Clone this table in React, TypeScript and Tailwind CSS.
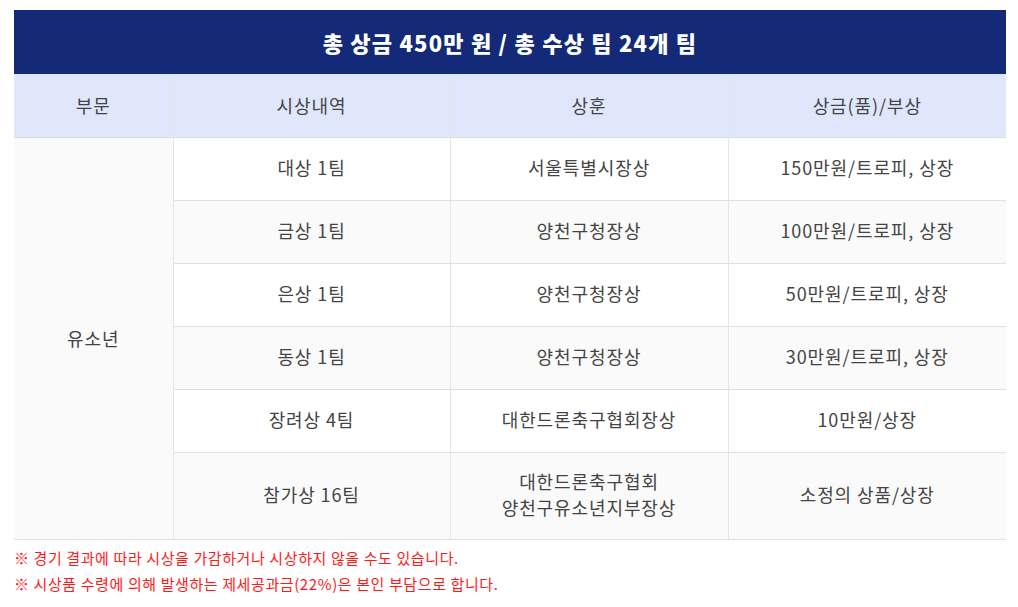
const rows = [
  { award: '대상 1팀', title: ['서울특별시장상'], prize: '150만원/트로피, 상장' },
  { award: '금상 1팀', title: ['양천구청장상'], prize: '100만원/트로피, 상장' },
  { award: '은상 1팀', title: ['양천구청장상'], prize: '50만원/트로피, 상장' },
  { award: '동상 1팀', title: ['양천구청장상'], prize: '30만원/트로피, 상장' },
  { award: '장려상 4팀', title: ['대한드론축구협회장상'], prize: '10만원/상장' },
  { award: '참가상 16팀', title: ['대한드론축구협회', '양천구유소년지부장상'], prize: '소정의 상품/상장' },
];

export default function App() {
  return (
    <div className="min-h-screen bg-white pt-[10px] pl-[14px] font-['Noto_Sans_CJK_KR','Noto_Sans',sans-serif] text-[#444]">
      <div className="w-[992px]">
        <div className="flex h-[64px] items-center justify-center bg-[#142a78] text-[22px] font-extrabold tracking-[1.2px] text-white">
          총 상금 450만 원 / 총 수상 팀 24개 팀
        </div>
        <table className="w-full table-fixed border-collapse text-[18px] tracking-[0.9px]">
          <colgroup>
            <col className="w-[159px]" />
            <col className="w-[277px]" />
            <col className="w-[278px]" />
            <col className="w-[278px]" />
          </colgroup>
          <thead>
            <tr className="h-[63px] bg-[#e0e7fd] border-b border-[#dcdcdc]">
              <th className="font-normal">부문</th>
              <th className="border-l border-[#e5e5e5] font-normal">시상내역</th>
              <th className="border-l border-[#e5e5e5] font-normal">상훈</th>
              <th className="border-l border-[#e5e5e5] font-normal">상금(품)/부상</th>
            </tr>
          </thead>
          <tbody>
            {rows.map((r, i) => (
              <tr
                key={r.award}
                className={`${i === 5 ? 'h-[87px]' : 'h-[63px]'} ${i % 2 === 1 ? 'bg-[#fafafa]' : 'bg-white'} border-b border-[#e0e0e0]`}
              >
                {i === 0 && (
                  <td rowSpan={6} className="bg-[#fafafa] text-center">
                    유소년
                  </td>
                )}
                <td className="border-l border-[#e5e5e5] pb-[3px] text-center">{r.award}</td>
                <td className="border-l border-[#e5e5e5] pb-[3px] text-center leading-[26px]">
                  {r.title.map((t) => (
                    <div key={t}>{t}</div>
                  ))}
                </td>
                <td className="border-l border-[#e5e5e5] pb-[3px] text-center">{r.prize}</td>
              </tr>
            ))}
          </tbody>
        </table>
        <div className="mt-[5px] text-[15px] leading-[26px] tracking-[0.6px] text-[#ff1a1a]">
          <p>※ 경기 결과에 따라 시상을 가감하거나 시상하지 않을 수도 있습니다.</p>
          <p>※ 시상품 수령에 의해 발생하는 제세공과금(22%)은 본인 부담으로 합니다.</p>
        </div>
      </div>
    </div>
  );
}
